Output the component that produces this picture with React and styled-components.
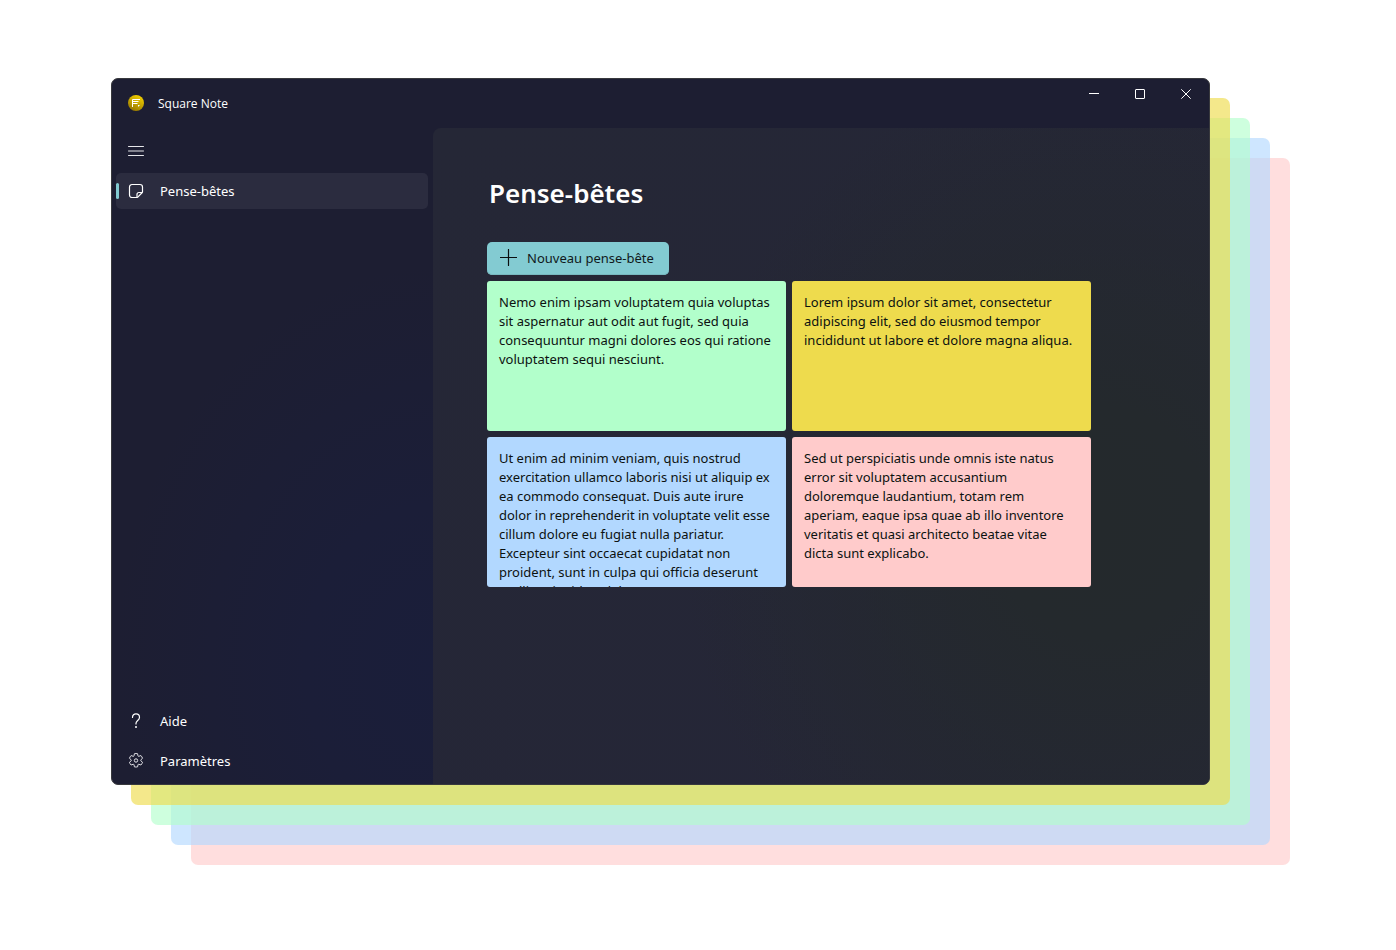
import React from "react";
import styled, { createGlobalStyle, css } from "styled-components";

const GlobalStyle = createGlobalStyle`
  * { box-sizing: border-box; }
  body {
    margin: 0;
    background: #ffffff;
    font-family: "Noto Sans", "Open Sans", sans-serif;
    font-size: 13px;
    color: #ffffff;
  }
  button { font: inherit; color: inherit; border: 0; background: none; padding: 0; }
`;

const Page = styled.div`
  padding: 78px 186px 165px 111px;
`;

const Window = styled.div`
  display: flex;
  flex-direction: column;
  min-height: calc(100vh - 243px);
  border: 1px solid #38393d;
  border-radius: 7px;
  overflow: hidden;
  background: #1d1e32;
  box-shadow:
    20px 20px 0 rgba(238, 219, 77, 0.65),
    40px 40px 0 rgba(178, 255, 203, 0.63),
    60px 60px 0 rgba(178, 216, 255, 0.63),
    80px 80px 0 rgba(255, 203, 203, 0.63);
`;

const TitleBar = styled.header`
  display: flex;
  align-items: flex-start;
  height: 49px;
`;

const Brand = styled.div`
  display: flex;
  align-items: center;
  gap: 14px;
  height: 48px;
  padding-left: 16px;
  font-family: "Open Sans", sans-serif;
  font-size: 12px;
`;

const Captions = styled.div`
  display: flex;
  margin-left: auto;
`;

const CaptionButton = styled.button`
  display: grid;
  place-items: center;
  width: 46px;
  height: 30px;
`;

const Body = styled.div`
  display: flex;
  flex: 1;
  background: radial-gradient(ellipse 320px 400px at 322px 82%, #1a1e3a 0%, #1b1e38 40%, rgba(29, 30, 50, 0) 100%);
`;

const Sidebar = styled.nav`
  display: flex;
  flex-direction: column;
  gap: 4px;
  width: 321px;
  flex-shrink: 0;
  padding: 5px 5px 5px 4px;
`;

const iconCell = css`
  svg { width: 16px; height: 16px; flex-shrink: 0; }
`;

const MenuButton = styled.button`
  display: flex;
  align-items: center;
  width: 40px;
  height: 36px;
  padding-left: 12px;
  ${iconCell}
`;

const NavItem = styled.a`
  display: flex;
  align-items: center;
  gap: 16px;
  height: 36px;
  padding-left: 12px;
  border-radius: 5px;
  color: inherit;
  text-decoration: none;
  position: relative;
  ${iconCell}
  ${(p) =>
    p.$active &&
    css`
      background: #2b2c3f;
      &::before {
        content: "";
        position: absolute;
        left: 0;
        top: 10px;
        width: 3px;
        height: 16px;
        border-radius: 2px;
        background: #82cad1;
      }
    `}
`;

const Spacer = styled.div`
  flex: 1;
`;

const Main = styled.main`
  flex: 1;
  min-width: 0;
  padding: 44px 54px;
  border-top-left-radius: 8px;
  background:
    radial-gradient(ellipse 420px 460px at 86% 60%, #24292c 0%, #24292d 25%, rgba(36, 40, 49, 0) 100%),
    linear-gradient(155deg, #252736 0%, #252637 100%);
`;

const Heading = styled.h1`
  margin: 0 0 28px;
  padding-left: 2px;
  font-size: 26px;
  line-height: 42px;
  font-weight: 600;
`;

const NewButton = styled.button`
  display: flex;
  align-items: center;
  gap: 10px;
  height: 33px;
  padding: 0 15px 2px 13px;
  margin-bottom: 6px;
  border-radius: 5px;
  background: #83cbd2;
  box-shadow: inset 0 -1px 0 #78b9c0;
  color: #10191b;
`;

const Notes = styled.div`
  display: grid;
  grid-template-columns: repeat(auto-fill, 299px);
  gap: 6px;
`;

const Note = styled.article`
  height: 150px;
  padding: 12px 12px 0;
  border-radius: 3px;
  overflow: hidden;
  line-height: 19px;
  color: #0c1210;
  background: ${(p) => p.$color};
`;

const LogoIcon = () => (
  <svg width="16" height="16" viewBox="0 0 16 16" fill="none" aria-hidden="true">
    <defs>
      <linearGradient id="gold" x1="12" y1="0" x2="4" y2="16" gradientUnits="userSpaceOnUse">
        <stop offset="0" stopColor="#f5d200" />
        <stop offset="1" stopColor="#947500" />
      </linearGradient>
    </defs>
    <circle cx="8" cy="8" r="8" fill="url(#gold)" />
    <path d="M4.500 12V4.500H12M4.500 6.500H10.500M4.500 8.500H9.500" stroke="#fff" />
    <path d="M10 10h2l-2 2z" fill="#fff" />
  </svg>
);

const MenuIcon = () => (
  <svg viewBox="0 0 16 16" stroke="#e6e6ea" fill="none" aria-hidden="true">
    <path d="M0.5 3.5h15M0.5 8h15M0.5 12.5h15" strokeLinecap="round" />
  </svg>
);

const NoteIcon = () => (
  <svg viewBox="0 0 16 16" stroke="#fff" strokeWidth="1.2" fill="none" strokeLinejoin="round" aria-hidden="true">
    <path d="M4 1.500h8a2.500 2.500 0 0 1 2.500 2.500v4.700a1.500 1.500 0 0 1-.45 1.060l-4.300 4.300a1.500 1.500 0 0 1-1.050.44H4a2.500 2.500 0 0 1-2.500-2.500v-8a2.500 2.500 0 0 1 2.500-2.500z" />
    <path d="M14.300 9.500H11a2 2 0 0 0-2 2v2.800" />
  </svg>
);

const HelpIcon = () => (
  <svg viewBox="0 0 16 16" stroke="#fff" strokeWidth="1.200" fill="none" aria-hidden="true">
    <path d="M4.500 4.400C4.500 2.200 6 .8 8 .8s3.500 1.400 3.500 3.400c0 1.600-.9 2.500-1.800 3.300C8.800 8.300 8 9 8 10.300v.7" strokeLinecap="round" />
    <circle cx="8" cy="13.900" r="1" fill="#fff" stroke="none" />
  </svg>
);

const GearIcon = () => (
  <svg viewBox="0 1 16 16" stroke="#e6e6ea" fill="none" strokeLinejoin="round" aria-hidden="true">
    <path
      transform="translate(8 8.500) scale(1.060) translate(-8 -7.500)"
      strokeWidth="0.900"
      d="M6.500 1.100 a7 7 0 0 1 3 0 l.35 1.900 a.7.7 0 0 0 .95.500 l1.850-.65 a7 7 0 0 1 1.500 2.600 l-1.450 1.250 a.8.8 0 0 0 0 1.200 l1.450 1.250 a7 7 0 0 1-1.500 2.600 l-1.850-.65 a.7.7 0 0 0-.95.500 l-.35 1.900 a7 7 0 0 1-3 0 l-.35-1.900 a.7.7 0 0 0-.95-.500 l-1.850.65 a7 7 0 0 1-1.500-2.600 l1.450-1.250 a.8.8 0 0 0 0-1.200 l-1.450-1.250 a7 7 0 0 1 1.500-2.600 l1.850.65 a.7.7 0 0 0 .95-.500z"
    />
    <circle cx="8" cy="8.500" r="1.700" />
  </svg>
);

const PlusIcon = () => (
  <svg width="17" height="17" viewBox="0 0 17 17" stroke="#0a0f10" strokeWidth="1.200" fill="none" aria-hidden="true">
    <path d="M8.500 0.500v16M0.500 8.500h16" strokeLinecap="round" />
  </svg>
);

const captionPaths = {
  Réduire: "M0 4.500h10",
  Agrandir: "M1 0.500h8a.5.5 0 0 1 .5.5v8a.5.5 0 0 1-.5.5h-8a.5.5 0 0 1-.5-.5v-8a.5.5 0 0 1 .5-.5z",
  Fermer: "M0.300 0.300l9.400 9.400M9.700 0.300l-9.400 9.400",
};

const notes = [
  ["#b2ffcb", "Nemo enim ipsam voluptatem quia voluptas sit aspernatur aut odit aut fugit, sed quia consequuntur magni dolores eos qui ratione voluptatem sequi nesciunt."],
  ["#eedb4d", "Lorem ipsum dolor sit amet, consectetur adipiscing elit, sed do eiusmod tempor incididunt ut labore et dolore magna aliqua."],
  ["#b2d8ff", "Ut enim ad minim veniam, quis nostrud exercitation ullamco laboris nisi ut aliquip ex ea commodo consequat. Duis aute irure dolor in reprehenderit in voluptate velit esse cillum dolore eu fugiat nulla pariatur. Excepteur sint occaecat cupidatat non proident, sunt in culpa qui officia deserunt mollit anim id est laborum."],
  ["#ffcbcb", "Sed ut perspiciatis unde omnis iste natus error sit voluptatem accusantium doloremque laudantium, totam rem aperiam, eaque ipsa quae ab illo inventore veritatis et quasi architecto beatae vitae dicta sunt explicabo."],
];

export default function App() {
  return (
    <>
      <GlobalStyle />
      <Page>
        <Window>
          <TitleBar>
            <Brand>
              <LogoIcon />
              <span>Square Note</span>
            </Brand>
            <Captions>
              {Object.entries(captionPaths).map(([label, d]) => (
                <CaptionButton key={label} aria-label={label}>
                  <svg width="10" height="10" viewBox="0 0 10 10" stroke="#fff" fill="none">
                    <path d={d} />
                  </svg>
                </CaptionButton>
              ))}
            </Captions>
          </TitleBar>
          <Body>
            <Sidebar>
              <MenuButton aria-label="Menu">
                <MenuIcon />
              </MenuButton>
              <NavItem href="#notes" $active>
                <NoteIcon />
                Pense-bêtes
              </NavItem>
              <Spacer />
              <NavItem href="#aide">
                <HelpIcon />
                Aide
              </NavItem>
              <NavItem href="#parametres">
                <GearIcon />
                Paramètres
              </NavItem>
            </Sidebar>
            <Main>
              <Heading>Pense-bêtes</Heading>
              <NewButton>
                <PlusIcon />
                Nouveau pense-bête
              </NewButton>
              <Notes>
                {notes.map(([color, text]) => (
                  <Note key={color} $color={color}>
                    {text}
                  </Note>
                ))}
              </Notes>
            </Main>
          </Body>
        </Window>
      </Page>
    </>
  );
}
